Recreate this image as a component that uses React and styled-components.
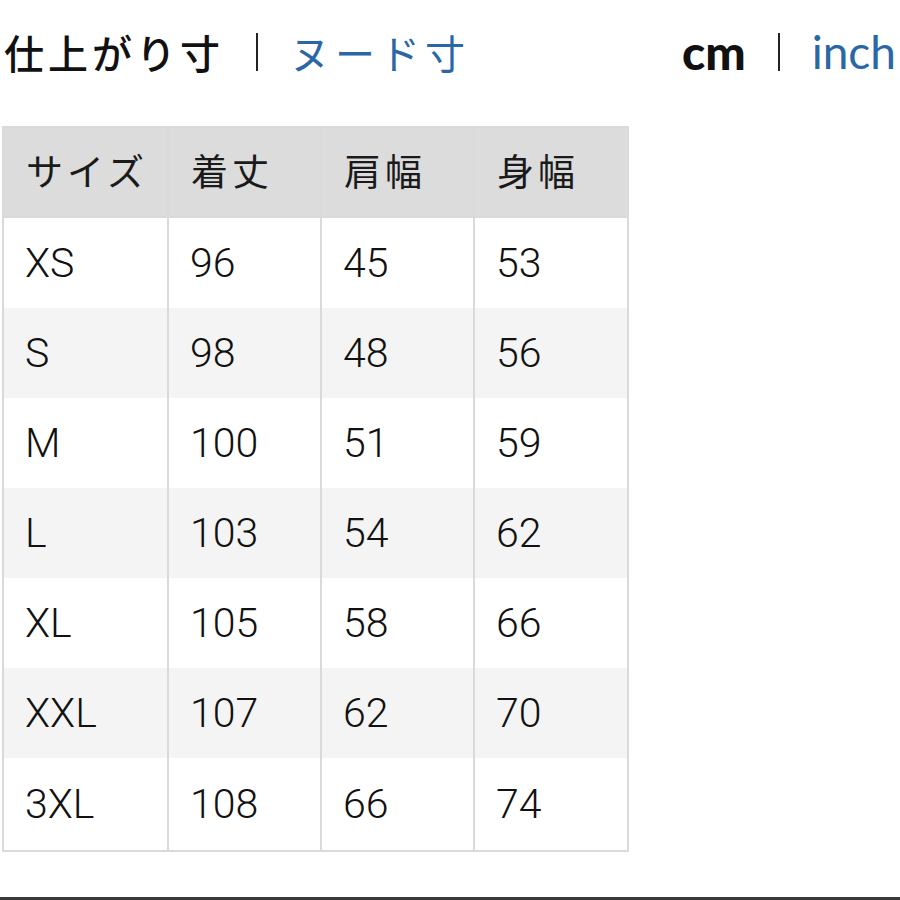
import React from "react";
import styled, { createGlobalStyle } from "styled-components";

const GlobalStyle = createGlobalStyle`
  html, body { margin: 0; padding: 0; background: #fff; }
  body { width: 900px; height: 900px; overflow: hidden; }
`;

const Page = styled.div`
  width: 900px;
  height: 900px;
  display: flex;
  flex-direction: column;
  font-family: "Noto Sans CJK JP", "Noto Sans", sans-serif;
  color: #111;
`;

const TopBar = styled.div`
  height: 126px;
  display: flex;
  align-items: center;
  justify-content: space-between;
  padding: 0 4px 0 4px;
  box-sizing: border-box;
`;

const Switch = styled.div`
  display: flex;
  align-items: center;
  gap: ${p => p.$gap || 26}px;
  margin-top: -22px;
`;

const Option = styled.span`
  font-size: ${p => p.$size || 40}px;
  font-weight: ${p => (p.$active ? (p.$bold || 500) : 400)};
  color: ${p => (p.$active ? "#111" : "#2a67a6")};
  letter-spacing: ${p => p.$spacing || 0}px;
  font-family: ${p => (p.$latin ? '"Lato", "Noto Sans", sans-serif' : '"Noto Sans CJK JP", sans-serif')};
  line-height: 1;
`;

const Divider = styled.span`
  width: 2px;
  height: 38px;
  background: #222;
`;

const Table = styled.table`
  border-collapse: collapse;
  margin-left: 2px;
  width: 625px;
  table-layout: fixed;
`;

const Row = styled.tr`
  background: ${p => (p.$shade ? "#f4f4f4" : "#fff")};
`;

const HeadCell = styled.th`
  height: 84px;
  background: #dcdcdc;
  border: 2px solid #dadada;
  text-align: left;
  padding: 0 0 4px 22px;
  font-weight: 400;
  font-size: 37px;
  letter-spacing: 4px;
  font-family: "Noto Sans CJK JP", sans-serif;
  color: #1a1a1a;
`;

const Cell = styled.td`
  height: 90px;
  border: 2px solid #dadada;
  border-top: none;
  border-bottom: none;
  padding: 0 0 0 21px;
  font-family: "Roboto", "Liberation Sans", sans-serif;
  font-weight: 300;
  font-size: 41px;
  color: #111;
`;

const LastRow = styled(Row)`
  td { border-bottom: 2px solid #dadada; height: 92px; }
`;

const Spacer = styled.div`
  flex: 1;
`;

const BottomLine = styled.div`
  height: 3px;
  background: #3a3a3a;
`;

const headers = ["サイズ", "着丈", "肩幅", "身幅"];
const rows = [
  ["XS", "96", "45", "53"],
  ["S", "98", "48", "56"],
  ["M", "100", "51", "59"],
  ["L", "103", "54", "62"],
  ["XL", "105", "58", "66"],
  ["XXL", "107", "62", "70"],
  ["3XL", "108", "66", "74"],
];

const widths = [165, 153, 153, 154];

export default function App() {
  return (
    <>
      <GlobalStyle />
      <Page>
        <TopBar>
          <Switch $gap={32}>
            <Option $active $bold={500} $spacing={4}>仕上がり寸</Option>
            <Divider />
            <Option $spacing={5}>ヌード寸</Option>
          </Switch>
          <Switch $gap={32}>
            <Option $active $latin $bold={900} $size={48}>cm</Option>
            <Divider />
            <Option $latin $size={46}>inch</Option>
          </Switch>
        </TopBar>
        <Table>
          <colgroup>
            {widths.map((w, i) => <col key={i} style={{ width: w }} />)}
          </colgroup>
          <thead>
            <tr>
              {headers.map(h => <HeadCell key={h}>{h}</HeadCell>)}
            </tr>
          </thead>
          <tbody>
            {rows.map((r, i) => {
              const R = i === rows.length - 1 ? LastRow : Row;
              return (
                <R key={r[0]} $shade={i % 2 === 1}>
                  {r.map((v, j) => <Cell key={j}>{v}</Cell>)}
                </R>
              );
            })}
          </tbody>
        </Table>
        <Spacer />
        <BottomLine />
      </Page>
    </>
  );
}
